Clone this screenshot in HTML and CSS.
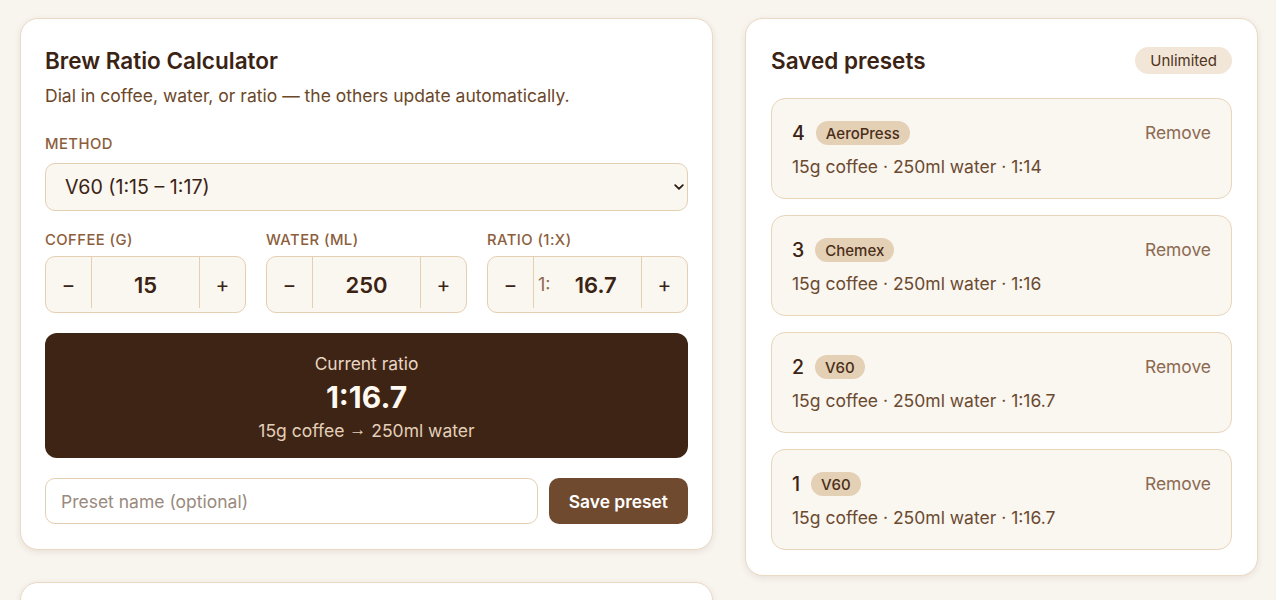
FILE: index.html
```html
<!DOCTYPE html>
<html lang="en">
<head>
<meta charset="utf-8">
<title>Brew Ratio Calculator</title>
<link rel="stylesheet" href="styles.css">
</head>
<body>
<main class="layout">
  <div class="col">
    <section class="card calc">
      <h1 class="card-title">Brew Ratio Calculator</h1>
      <p class="subtitle">Dial in coffee, water, or ratio — the others update automatically.</p>

      <label class="field-label method-label">Method</label>
      <div class="select-wrap">
        <select class="select">
          <option>V60 (1:15 – 1:17)</option>
          <option>Chemex (1:15 – 1:17)</option>
          <option>AeroPress (1:12 – 1:16)</option>
        </select>
        <svg class="chev" width="10" height="6" viewBox="0 0 10 6"><path d="M1.2 1.2 L5 4.8 L8.8 1.2" fill="none" stroke="#2a1a10" stroke-width="1.8" stroke-linecap="round" stroke-linejoin="round"/></svg>
      </div>

      <div class="steppers">
        <div class="step-field">
          <span class="field-label">Coffee (g)</span>
          <div class="stepper">
            <button class="step-btn">−</button>
            <div class="step-value"><span class="num">15</span></div>
            <button class="step-btn">+</button>
          </div>
        </div>
        <div class="step-field">
          <span class="field-label">Water (ml)</span>
          <div class="stepper">
            <button class="step-btn">−</button>
            <div class="step-value"><span class="num">250</span></div>
            <button class="step-btn">+</button>
          </div>
        </div>
        <div class="step-field">
          <span class="field-label">Ratio (1:x)</span>
          <div class="stepper">
            <button class="step-btn">−</button>
            <div class="step-value ratio"><span class="prefix">1:</span><span class="num">16.7</span></div>
            <button class="step-btn">+</button>
          </div>
        </div>
      </div>

      <div class="result">
        <div class="result-label">Current ratio</div>
        <div class="result-value">1:16.7</div>
        <div class="result-detail">15g coffee <span class="arrow">→</span> 250ml water</div>
      </div>

      <div class="save-row">
        <input class="text-input" type="text" placeholder="Preset name (optional)">
        <button class="save-btn">Save preset</button>
      </div>
    </section>

    <section class="card history"></section>
  </div>

  <aside class="card presets">
    <div class="presets-head">
      <h2 class="card-title">Saved presets</h2>
      <span class="pill">Unlimited</span>
    </div>
    <ul class="preset-list">
      <li class="preset">
        <div class="preset-top">
          <div class="preset-name"><span class="preset-num">4</span><span class="tag">AeroPress</span></div>
          <button class="remove">Remove</button>
        </div>
        <div class="preset-meta">15g coffee · 250ml water · 1:14</div>
      </li>
      <li class="preset">
        <div class="preset-top">
          <div class="preset-name"><span class="preset-num">3</span><span class="tag">Chemex</span></div>
          <button class="remove">Remove</button>
        </div>
        <div class="preset-meta">15g coffee · 250ml water · 1:16</div>
      </li>
      <li class="preset">
        <div class="preset-top">
          <div class="preset-name"><span class="preset-num">2</span><span class="tag">V60</span></div>
          <button class="remove">Remove</button>
        </div>
        <div class="preset-meta">15g coffee · 250ml water · 1:16.7</div>
      </li>
      <li class="preset">
        <div class="preset-top">
          <div class="preset-name"><span class="preset-num">1</span><span class="tag">V60</span></div>
          <button class="remove">Remove</button>
        </div>
        <div class="preset-meta">15g coffee · 250ml water · 1:16.7</div>
      </li>
    </ul>
  </aside>
</main>
</body>
</html>
```

FILE: styles.css
```css
* { box-sizing: border-box; }

html, body {
  margin: 0;
  padding: 0;
}

body {
  background: #f8f4ee;
  font-family: Inter, "Noto Sans", "Liberation Sans", sans-serif;
  color: #3b2314;
}

.layout {
  display: grid;
  grid-template-columns: 693px 513px;
  gap: 32px;
  padding: 18px 18px 18px 20px;
  align-items: start;
}

.col {
  display: flex;
  flex-direction: column;
  gap: 32px;
}

.card {
  background: #ffffff;
  border: 1px solid #ead9c3;
  border-radius: 18px;
  box-shadow: 0 2px 6px rgba(90, 60, 30, 0.10);
}

.calc {
  padding: 28px 24px 25px;
}

.history {
  min-height: 200px;
}

.card-title {
  margin: 0;
  font-size: 22.5px;
  line-height: 27px;
  font-weight: 600;
  color: #3b2314;
}

.subtitle {
  margin: 10px 0 0;
  font-size: 17.5px;
  line-height: 24px;
  color: #6b4729;
}

.field-label {
  display: block;
  font-size: 14.8px;
  line-height: 20px;
  font-weight: 500;
  text-transform: uppercase;
  letter-spacing: 0.03em;
  color: #8c5e3c;
}

.method-label {
  margin-top: 26px;
}

.select-wrap {
  position: relative;
  margin-top: 9px;
}

.select {
  appearance: none;
  -webkit-appearance: none;
  display: block;
  width: 100%;
  height: 48px;
  padding: 0 40px 0 19px;
  border: 1px solid #e5cfb2;
  border-radius: 10px;
  background: #faf6f0;
  font-family: inherit;
  font-size: 19.6px;
  color: #3b2314;
}

.chev {
  position: absolute;
  right: 4px;
  top: 21px;
  width: 10px;
  height: 6px;
  pointer-events: none;
}

.steppers {
  display: grid;
  grid-template-columns: repeat(3, minmax(0, 1fr));
  gap: 20px;
  margin-top: 19px;
}

.step-field .field-label {
  margin-bottom: 6px;
}

.stepper {
  display: flex;
  align-items: flex-start;
  height: 57px;
  border: 1px solid #e5cfb2;
  border-radius: 10px;
  background: #faf6f0;
  overflow: hidden;
}

.step-btn {
  flex: 0 0 45px;
  height: 55px;
  border: 0;
  background: transparent;
  font-family: inherit;
  font-size: 21px;
  color: #3b2314;
  padding: 0;
}

.step-value {
  flex: 1;
  height: 51px;
  display: flex;
  align-items: center;
  justify-content: center;
  border-left: 1px solid #e5cfb2;
  border-right: 1px solid #e5cfb2;
  padding-top: 4px;
}

.step-value .num {
  font-size: 22px;
  font-weight: 600;
  color: #3b2314;
}

.step-value.ratio {
  justify-content: flex-start;
  padding-left: 4px;
}

.step-value.ratio .prefix {
  font-size: 18px;
  color: #8c6a50;
}

.step-value.ratio .num {
  flex: 1;
  text-align: center;
}

.result {
  margin-top: 20px;
  background: #3e2415;
  border-radius: 12px;
  padding: 19px 16px 15px;
  text-align: center;
  color: #f3e6d6;
}

.result-label {
  font-size: 17.4px;
  line-height: 24px;
  color: #e8d6c2;
}

.result-value {
  margin-top: 2px;
  font-size: 30px;
  line-height: 38px;
  font-weight: 700;
  color: #fff9f1;
}

.result-detail {
  margin-top: 3px;
  font-size: 17.5px;
  line-height: 24px;
  color: #e3cfb9;
}

.arrow {
  font-family: "Noto Sans", sans-serif;
  font-size: 17px;
  position: relative;
  top: -2px;
}

.save-row {
  display: flex;
  gap: 11px;
  margin-top: 20px;
}

.text-input {
  flex: 1;
  min-width: 0;
  height: 46px;
  padding: 0 15px;
  border: 1px solid #e5cfb2;
  border-radius: 10px;
  background: #ffffff;
  font-family: inherit;
  font-size: 17.5px;
  color: #3b2314;
}

.text-input::placeholder {
  color: #9a8a7e;
}

.save-btn {
  height: 46px;
  padding: 0 20px;
  border: 0;
  border-radius: 10px;
  background: #6f4a2f;
  color: #ffffff;
  font-family: inherit;
  font-size: 17.4px;
  font-weight: 600;
}

.presets {
  padding: 28px 25px 25px;
}

.presets-head {
  display: flex;
  align-items: center;
  justify-content: space-between;
  height: 27px;
}

.pill {
  display: inline-flex;
  align-items: center;
  height: 27px;
  padding: 0 15px;
  border-radius: 999px;
  background: #f1e6d7;
  font-size: 15px;
  color: #4e3320;
}

.preset-list {
  list-style: none;
  margin: 24px 0 0;
  padding: 0;
  display: flex;
  flex-direction: column;
  gap: 16px;
}

.preset {
  background: #faf6f0;
  border: 1px solid #e8d5bb;
  border-radius: 14px;
  padding: 20px 20px 19px;
}

.preset-top {
  display: flex;
  align-items: center;
  justify-content: space-between;
  height: 28px;
}

.preset-name {
  display: flex;
  align-items: center;
  gap: 11px;
}

.preset-num {
  font-size: 19.5px;
  font-weight: 500;
  color: #3b2314;
}

.tag {
  display: inline-flex;
  align-items: center;
  height: 24px;
  padding: 0 10px;
  border-radius: 999px;
  background: #e4d0b5;
  font-size: 15px;
  font-weight: 500;
  color: #4a2e1a;
}

.remove {
  border: 0;
  background: transparent;
  padding: 0;
  margin-top: -2px;
  font-family: inherit;
  font-size: 17.4px;
  color: #8c6a50;
}

.preset-meta {
  margin-top: 8px;
  font-size: 17.5px;
  line-height: 24px;
  color: #6b4a30;
}
```
